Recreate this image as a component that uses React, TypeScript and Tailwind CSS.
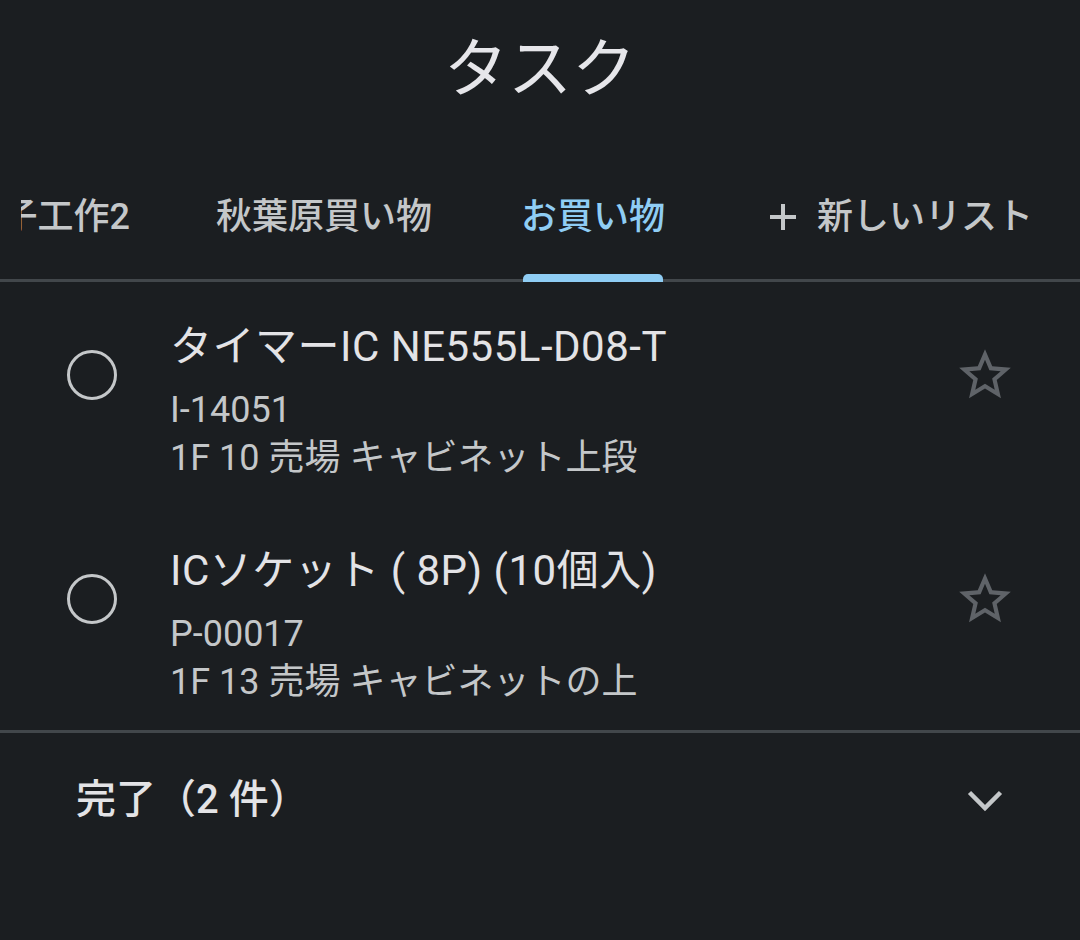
import React from "react";

const Star = () => (
  <svg width="62" height="62" viewBox="0 0 24 24" fill="#5f6368" aria-hidden>
    <path d="M22 9.24l-7.19-.62L12 2 9.19 8.63 2 9.24l5.46 4.73L5.82 21 12 17.27 18.18 21l-1.63-7.03L22 9.24zM12 15.4l-3.76 2.27 1-4.28-3.32-2.88 4.38-.38L12 6.1l1.71 4.04 4.38.38-3.32 2.88 1 4.28L12 15.4z" />
  </svg>
);

const Chevron = () => (
  <svg width="40" height="28" viewBox="0 0 40 28" fill="none" aria-hidden>
    <polyline points="4.5,6.5 20,22 35.5,6.5" stroke="#c4c7c9" strokeWidth="4.5" strokeLinecap="butt" strokeLinejoin="miter" />
  </svg>
);

const Plus = () => (
  <svg width="28" height="28" viewBox="0 0 28 28" aria-hidden>
    <rect x="12" y="1" width="4" height="26" fill="#c4c7c9" />
    <rect x="1" y="12" width="26" height="4" fill="#c4c7c9" />
  </svg>
);

type Task = { title: string; code: string; place: string };

const tasks: Task[] = [
  { title: "タイマーIC NE555L-D08-T", code: "I-14051", place: "1F 10 売場 キャビネット上段" },
  { title: "ICソケット ( 8P) (10個入)", code: "P-00017", place: "1F 13 売場 キャビネットの上" },
];

function TaskRow({ t }: { t: Task }) {
  return (
    <div className="flex items-start h-[224px] pt-[41px]">
      <div className="pl-[67px] shrink-0">
        <div className="mt-[27px] w-[50px] h-[50px] rounded-full border-[3px] border-[#c4c7c9]" />
      </div>
      <div className="ml-[53px] flex-1 flex flex-col">
        <div className="text-[42px] leading-[48px] tracking-[0.5px] text-[#e3e3e6] whitespace-nowrap">{t.title}</div>
        <div className="mt-[15px] text-[36px] leading-[48px] text-[#c4c7c9] whitespace-nowrap">{t.code}</div>
        <div className="text-[36px] leading-[48px] text-[#c4c7c9] whitespace-nowrap">{t.place}</div>
      </div>
      <div className="mt-[21px] mr-[64px] shrink-0">
        <Star />
      </div>
    </div>
  );
}

export default function App() {
  return (
    <div className="min-h-screen w-full bg-[#1b1e21] text-[#e3e3e6] font-[Roboto,'Noto_Sans_CJK_JP',sans-serif] overflow-hidden">
      <header className="h-[155px] flex justify-center pt-[30px]">
        <h1 className="text-[64px] leading-[80px] font-normal text-[#e6e6ea]">タスク</h1>
      </header>

      <nav className="h-[127px] border-b-[3px] border-[#42474b] flex items-stretch overflow-visible">
        <div className="ml-[21px] w-[153px] overflow-hidden flex justify-end items-center shrink-0">
          <span className="shrink-0 whitespace-nowrap pr-[44px] text-[36px] font-medium text-[#c4c7c9]">電子工作2</span>
        </div>
        <div className="shrink-0 flex items-center px-[42px]">
          <span className="whitespace-nowrap text-[36px] font-medium text-[#c4c7c9]">秋葉原買い物</span>
        </div>
        <div className="relative shrink-0 flex items-center px-[47px]">
          <span className="whitespace-nowrap text-[36px] font-medium text-[#8fcdf4]">お買い物</span>
          <div className="absolute bottom-[-3px] left-[49px] right-[49px] h-[8px] rounded-t-[5px] bg-[#8fcdf4]" />
        </div>
        <div className="shrink-0 flex items-center pl-[57px] gap-[20px]">
          <Plus />
          <span className="whitespace-nowrap text-[36px] font-medium text-[#c4c7c9]">新しいリスト</span>
        </div>
      </nav>

      <main>
        {tasks.map((t) => (
          <TaskRow key={t.code} t={t} />
        ))}
        <div className="h-[3px] bg-[#42474b]" />
        <div className="h-[134px] flex items-center justify-between pl-[76px] pr-[75px]">
          <span className="text-[40px] font-medium text-[#e3e3e6]">完了（2 件）</span>
          <Chevron />
        </div>
      </main>
    </div>
  );
}
